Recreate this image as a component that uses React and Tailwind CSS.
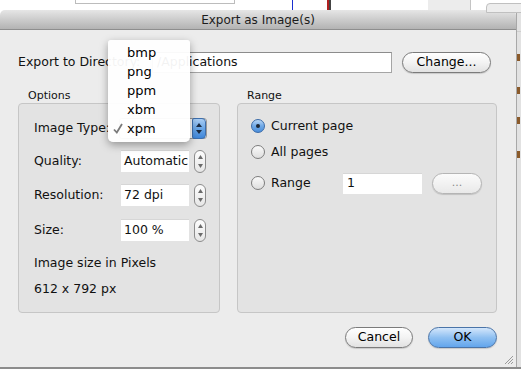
import React from "react";

const formats = ["bmp", "png", "ppm", "xbm", "xpm"];

function Stepper({ blue }) {
  if (blue) {
    return (
      <div className="w-[14px] h-[21px] rounded-r-[4px] rounded-l-[2px] border border-[#3d6fae] bg-gradient-to-b from-[#a9cdf3] via-[#6aa6e6] to-[#3f86d8] flex flex-col items-center justify-center gap-[3px]">
        <svg width="6" height="4" viewBox="0 0 6 4"><path d="M3 0L6 4H0Z" fill="#1b2a40" /></svg>
        <svg width="6" height="4" viewBox="0 0 6 4"><path d="M0 0H6L3 4Z" fill="#1b2a40" /></svg>
      </div>
    );
  }
  return (
    <div className="w-[12px] h-[23px] rounded-full border border-[#8c8c8c] bg-gradient-to-b from-[#fdfdfd] to-[#e6e6e6] flex flex-col items-center justify-center gap-[5px]">
      <svg width="5" height="4" viewBox="0 0 5 4"><path d="M2.5 0L5 4H0Z" fill="#6a6a6a" /></svg>
      <svg width="5" height="4" viewBox="0 0 5 4"><path d="M0 0H5L2.5 4Z" fill="#6a6a6a" /></svg>
    </div>
  );
}

function Radio({ checked, label }) {
  return (
    <div className="flex items-center">
      {checked ? (
        <span className="w-[14px] h-[14px] rounded-full border border-[#3a6aa8] bg-gradient-to-b from-[#b9d6f5] via-[#6fa8e6] to-[#4c8fdc] flex items-center justify-center">
          <span className="w-[4px] h-[4px] rounded-full bg-[#1d2633]" />
        </span>
      ) : (
        <span className="w-[14px] h-[14px] rounded-full border border-[#7d7d7d] bg-gradient-to-b from-[#fafafa] to-[#dedede]" />
      )}
      <span className="ml-[6px]">{label}</span>
    </div>
  );
}

function PillButton({ children, className, blue, disabled }) {
  const look = blue
    ? "border-[#4a74a8] bg-gradient-to-b from-[#d3e6fb] via-[#8fc0f1] to-[#62a5ec] text-black"
    : disabled
    ? "border-[#b5b5b5] bg-gradient-to-b from-[#fbfbfb] to-[#e9e9e9] text-[#8a8a8a]"
    : "border-[#7b7b7b] bg-gradient-to-b from-[#ffffff] via-[#f3f3f3] to-[#e2e2e2] text-black";
  return (
    <div className={`h-[21px] rounded-full border flex items-center justify-center shadow-[0_1px_1px_rgba(0,0,0,0.15)] ${look} ${className}`}>
      {children}
    </div>
  );
}

function OptionRow({ label, value, className }) {
  return (
    <div className={`flex items-center h-[22px] ${className}`}>
      <span className="w-[87px]">{label}</span>
      <div className="w-[68px] h-[22px] bg-white flex items-center pl-[3px] shadow-[inset_0_1px_0_#d6d6d6]">{value}</div>
      <div className="ml-[5px]">
        <Stepper />
      </div>
    </div>
  );
}

export default function App() {
  return (
    <div className="w-[521px] h-[369px] overflow-hidden bg-white flex flex-col font-['DejaVu_Sans',sans-serif] text-[12.5px] text-[#111]">
      {/* bits of the window behind */}
      <div className="h-[10px] relative shrink-0">
        <div className="absolute left-[75px] top-0 w-[160px] h-[4px] border border-t-0 border-[#bcbcbc]" />
        <div className="absolute left-[292px] top-0 w-[1px] h-[10px] bg-[#1a2fd0]" />
        <div className="absolute left-[327px] top-0 w-[2px] h-[10px] bg-[#b02020]" />
        <div className="absolute left-[329px] top-0 w-[2px] h-[10px] bg-[#444]" />
        <div className="absolute left-[428px] top-0 w-[43px] h-[10px] bg-[#ececec] border-r border-[#c4c4c4]" />
        <div className="absolute left-[486px] top-[3px] w-[40px] h-[10px] rounded-tl-[4px] bg-[#ededed] border border-[#c0c0c0]" />
      </div>

      <div className="flex h-[357px] shrink-0">
        {/* dialog */}
        <div className="w-[516px] flex flex-col shrink-0">
          <div className="h-[20px] rounded-t-[5px] bg-gradient-to-b from-[#e6e6e6] to-[#b3b3b3] border-b border-[#8e8e8e] flex items-center justify-center text-[12px] text-[#1c1c1c]">
            Export as Image(s)
          </div>

          <div className="flex-1 bg-[#ececec] relative flex flex-col">
            <div className="mt-[22px] pl-[18px] flex items-center h-[21px]">
              <span className="w-[134px]">Export to Directory:</span>
              <div className="w-[240px] h-[21px] bg-white border border-[#a5a5a5] border-t-[#8c8c8c] flex items-center pl-[4px]">
                /Applications
              </div>
              <PillButton className="ml-[10px] w-[89px]">Change...</PillButton>
            </div>

            <div className="mt-[15px] pl-[18px] flex gap-[17px]">
              <div className="flex flex-col">
                <div className="h-[15px] leading-[15px] pl-[10px] text-[11px]">Options</div>
                <div className="w-[202px] h-[210px] rounded-[4px] border border-[#c6c6c6] bg-[#e3e3e3] pl-[15px] flex flex-col">
                  <div className="mt-[13px] flex items-center h-[22px]">
                    <span className="w-[85px]">Image Type:</span>
                    <div className="w-[88px] h-[21px] bg-white border border-[#9a9a9a] rounded-[3px] flex items-center justify-between pl-[6px]">
                      <span>xpm</span>
                      <Stepper blue />
                    </div>
                  </div>
                  <OptionRow className="mt-[11px]" label="Quality:" value="Automatic" />
                  <OptionRow className="mt-[12px]" label="Resolution:" value="72 dpi" />
                  <OptionRow className="mt-[13px]" label="Size:" value="100 %" />
                  <div className="mt-[11px] h-[22px] flex items-center">Image size in Pixels</div>
                  <div className="mt-[4px] h-[22px] flex items-center">612 x 792 px</div>
                </div>
              </div>

              <div className="flex flex-col">
                <div className="h-[15px] leading-[15px] pl-[10px] text-[11px]">Range</div>
                <div className="w-[260px] h-[210px] rounded-[4px] border border-[#c6c6c6] bg-[#e3e3e3] pl-[13px] flex flex-col">
                  <div className="mt-[12px] h-[20px] flex items-center">
                    <Radio checked label="Current page" />
                  </div>
                  <div className="mt-[6px] h-[20px] flex items-center">
                    <Radio label="All pages" />
                  </div>
                  <div className="mt-[10px] h-[22px] flex items-center">
                    <div className="w-[92px]">
                      <Radio label="Range" />
                    </div>
                    <div className="w-[79px] h-[21px] bg-white flex items-center pl-[4px] shadow-[inset_0_1px_0_#d6d6d6]">1</div>
                    <PillButton disabled className="ml-[10px] w-[50px] h-[20px] text-[11px]">...</PillButton>
                  </div>
                </div>
              </div>
            </div>

            <div className="mt-[14px] pr-[19px] flex justify-end">
              <PillButton className="w-[68px] h-[20px]">Cancel</PillButton>
              <PillButton blue className="ml-[15px] w-[69px] h-[20px]">OK</PillButton>
            </div>

            {/* resize grip */}
            <svg className="absolute right-[2px] bottom-[2px]" width="11" height="11" viewBox="0 0 11 11">
              <path d="M10 2L2 10M10 5L5 10M10 8L8 10" stroke="#9a9a9a" strokeWidth="1" />
            </svg>

            {/* open popup menu */}
            <div className="absolute left-[108px] top-[10px] w-[82px] h-[102px] bg-white/95 rounded-[5px] rounded-t-[3px] shadow-[0_3px_9px_rgba(0,0,0,0.35)] pt-[3px]">
              {formats.map((f) => (
                <div key={f} className="h-[19px] flex items-center relative pl-[19px] text-[13px] text-black">
                  {f === "xpm" && (
                    <svg className="absolute left-[5px] top-[4px]" width="10" height="11" viewBox="0 0 10 11">
                      <path d="M1 6.5L3.8 9.5L9 1" fill="none" stroke="#7a7a7a" strokeWidth="1.8" />
                    </svg>
                  )}
                  {f}
                </div>
              ))}
            </div>
          </div>
        </div>

        {/* right edge of the window behind */}
        <div className="flex-1 bg-[#e2e2e2] border-l border-[#a8a8a8] flex flex-col">
          <div className="h-[22px] border-b border-[#cfcfcf]" />
          <div className="mt-[22px] h-[7px] w-[3px] bg-[#8a5a2a]" />
          <div className="mt-[26px] h-[7px] w-[3px] bg-[#8a5a2a]" />
          <div className="mt-[23px] h-[7px] w-[3px] bg-[#8a5a2a]" />
          <div className="mt-[27px] h-[7px] w-[3px] bg-[#8a5a2a]" />
        </div>
      </div>

      <div className="h-[2px] bg-[#8c8c8c] shrink-0" />
    </div>
  );
}
